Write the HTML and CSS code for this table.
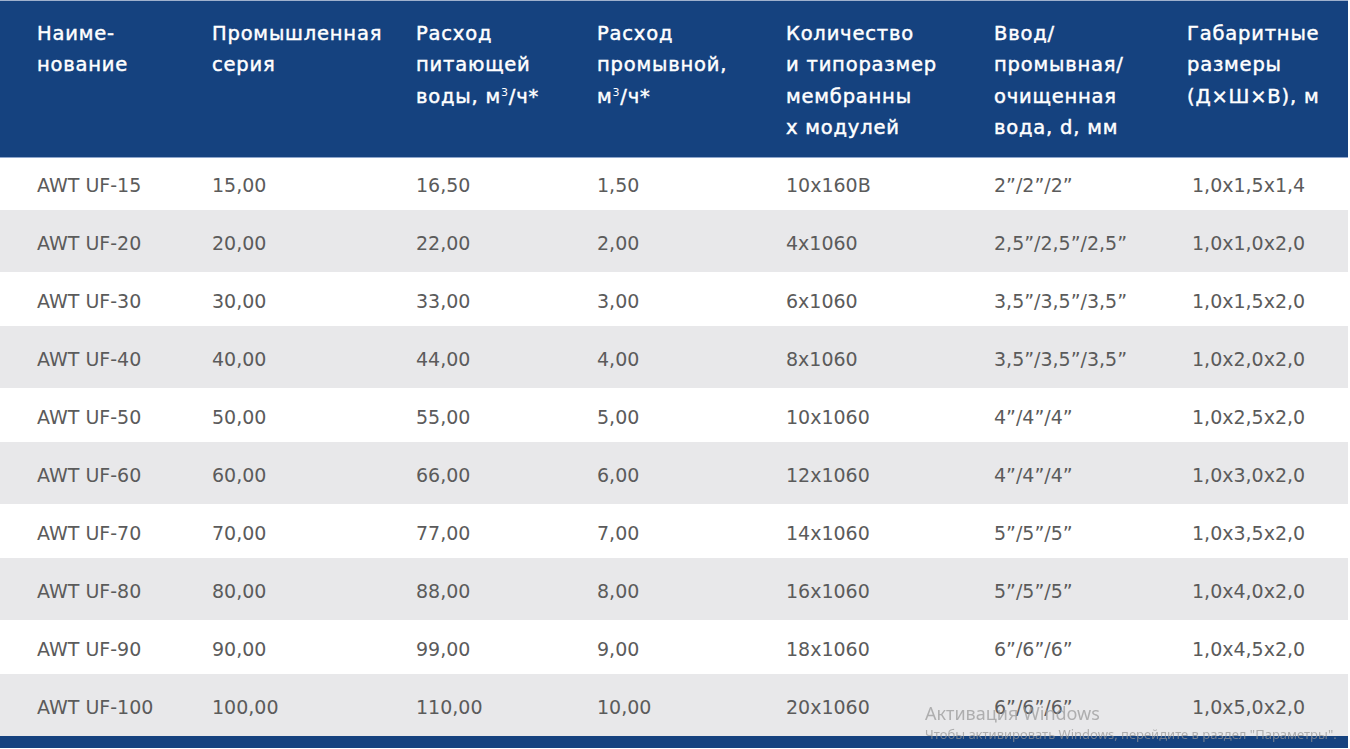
FILE: index.html
```html
<!DOCTYPE html>
<html lang="ru">
<head>
<meta charset="utf-8">
<title>AWT UF</title>
<link rel="stylesheet" href="styles.css">
</head>
<body>
<div class="page">
  <table class="spec">
    <colgroup>
      <col class="c1"><col class="c2"><col class="c3"><col class="c4"><col class="c5"><col class="c6"><col class="c7">
    </colgroup>
    <thead>
      <tr>
        <th>Наиме-<br>нование</th>
        <th>Промышленная<br>серия</th>
        <th>Расход<br>питающей<br>воды, м<sup>3</sup>/ч*</th>
        <th>Расход<br>промывной,<br>м<sup>3</sup>/ч*</th>
        <th>Количество<br>и типоразмер<br>мембранны<br>х модулей</th>
        <th>Ввод/<br>промывная/<br>очищенная<br>вода, d, мм</th>
        <th>Габаритные<br>размеры<br>(Д×Ш×В), м</th>
      </tr>
    </thead>
    <tbody>
      <tr class="first"><td>AWT UF-15</td><td>15,00</td><td>16,50</td><td>1,50</td><td>10x160B</td><td>2”/2”/2”</td><td>1,0x1,5x1,4</td></tr>
      <tr class="alt"><td>AWT UF-20</td><td>20,00</td><td>22,00</td><td>2,00</td><td>4x1060</td><td>2,5”/2,5”/2,5”</td><td>1,0x1,0x2,0</td></tr>
      <tr><td>AWT UF-30</td><td>30,00</td><td>33,00</td><td>3,00</td><td>6x1060</td><td>3,5”/3,5”/3,5”</td><td>1,0x1,5x2,0</td></tr>
      <tr class="alt"><td>AWT UF-40</td><td>40,00</td><td>44,00</td><td>4,00</td><td>8x1060</td><td>3,5”/3,5”/3,5”</td><td>1,0x2,0x2,0</td></tr>
      <tr><td>AWT UF-50</td><td>50,00</td><td>55,00</td><td>5,00</td><td>10x1060</td><td>4”/4”/4”</td><td>1,0x2,5x2,0</td></tr>
      <tr class="alt"><td>AWT UF-60</td><td>60,00</td><td>66,00</td><td>6,00</td><td>12x1060</td><td>4”/4”/4”</td><td>1,0x3,0x2,0</td></tr>
      <tr><td>AWT UF-70</td><td>70,00</td><td>77,00</td><td>7,00</td><td>14x1060</td><td>5”/5”/5”</td><td>1,0x3,5x2,0</td></tr>
      <tr class="alt"><td>AWT UF-80</td><td>80,00</td><td>88,00</td><td>8,00</td><td>16x1060</td><td>5”/5”/5”</td><td>1,0x4,0x2,0</td></tr>
      <tr><td>AWT UF-90</td><td>90,00</td><td>99,00</td><td>9,00</td><td>18x1060</td><td>6”/6”/6”</td><td>1,0x4,5x2,0</td></tr>
      <tr class="alt"><td>AWT UF-100</td><td>100,00</td><td>110,00</td><td>10,00</td><td>20x1060</td><td>6”/6”/6”</td><td>1,0x5,0x2,0</td></tr>
    </tbody>
  </table>
  <div class="footer-band"></div>
</div>
<div class="watermark">
  <div class="wm-title">Активация Windows</div>
  <div class="wm-text">Чтобы активировать Windows, перейдите в раздел "Параметры".</div>
</div>
</body>
</html>
```
FILE: styles.css
```css
html, body {
  margin: 0;
  padding: 0;
  background: #ffffff;
  overflow: hidden;
}
body {
  width: 1350px;
  height: 749px;
  font-family: "DejaVu Sans", "Noto Sans", sans-serif;
}
.page {
  width: 1348px;
  border-top: 1px solid #9fb1cd;
}
.spec {
  width: 1348px;
  border-collapse: collapse;
  table-layout: fixed;
}
.c1 { width: 212px; }
.c2 { width: 204px; }
.c3 { width: 181px; }
.c4 { width: 189px; }
.c5 { width: 208px; }
.c6 { width: 193px; }
.c7 { width: 161px; }

thead tr {
  background: #15427f;
  height: 156px;
  border-bottom: 1px solid #8ea6cc;
}
th {
  color: #ffffff;
  font-weight: 400;
  font-size: 19.5px;
  letter-spacing: 0.8px;
  -webkit-text-stroke: 0.45px #ffffff;
  line-height: 31.3px;
  text-align: left;
  vertical-align: top;
  padding: 17px 0 0 0;
  white-space: nowrap;
}
th:first-child, td:first-child { padding-left: 37px; }
th sup {
  font-size: 11px;
  line-height: 0;
  vertical-align: 7px;
  -webkit-text-stroke: 0;
}
tbody tr { height: 54px; }
tbody tr.first { height: 53px; }
tbody tr.alt { height: 62px; background: #e8e8ea; }
td {
  color: #5b5b5b;
  font-size: 19px;
  font-weight: 400;
  padding: 3px 0 0 0;
  vertical-align: middle;
  white-space: nowrap;
}
td:last-child { padding-left: 5px; }
.footer-band {
  height: 12px;
  background: #15427f;
}
.watermark {
  position: fixed;
  left: 925px;
  top: 701px;
  color: rgba(150, 150, 150, 0.7);
  font-family: "Noto Sans", "DejaVu Sans", sans-serif;
  white-space: nowrap;
}
.wm-title {
  font-size: 18px;
  line-height: 24px;
}
.wm-text {
  font-size: 13px;
  line-height: 18px;
}
```
